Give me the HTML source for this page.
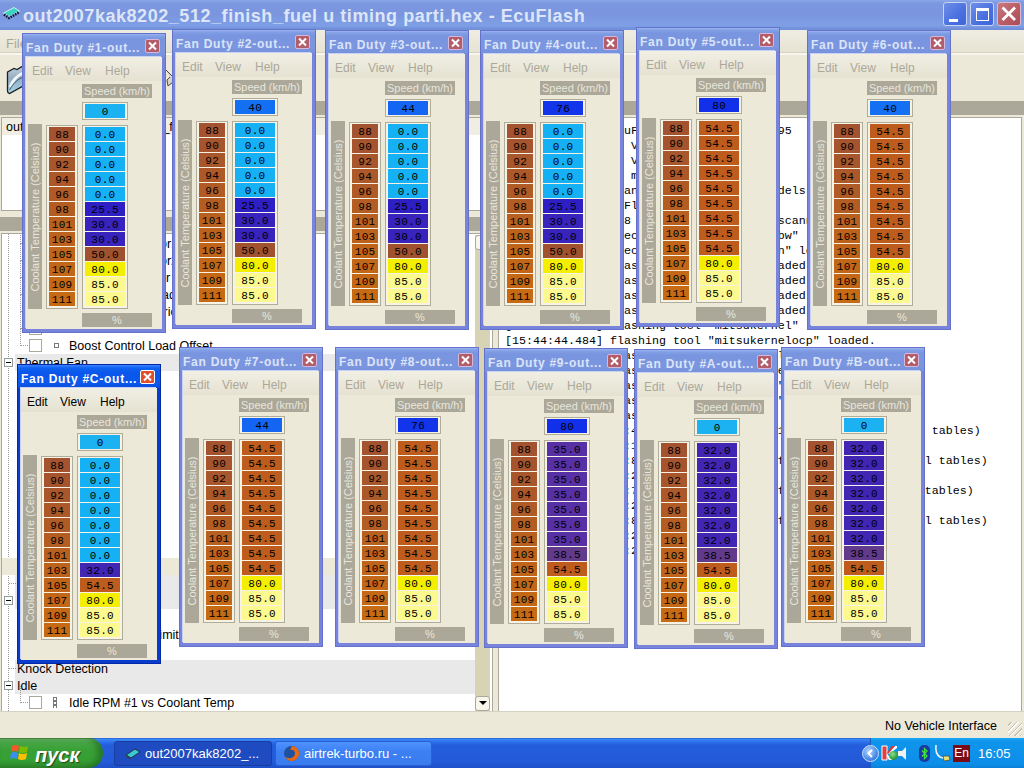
<!DOCTYPE html><html><head><meta charset="utf-8"><style>
html,body{margin:0;padding:0;}
body{width:1024px;height:768px;overflow:hidden;position:relative;background:#ece9d8;font-family:"Liberation Sans", sans-serif;}
div{box-sizing:border-box;}
#title{position:absolute;left:0;top:0;width:1024px;height:30px;background:linear-gradient(#8ca8ea 0,#7c98e0 3px,#7a95de 14px,#7d9ce3 22px,#7e9fe6 26px,#7592dc 28px,#708cd8 30px);}
#ticon{position:absolute;left:2px;top:6px;}
#ttext{position:absolute;left:23px;top:6px;font:bold 18px "Liberation Sans", sans-serif;color:#dce6f8;white-space:nowrap;letter-spacing:0.55px;}
.tbtn{position:absolute;top:2px;width:24px;height:24px;border:1px solid #c8d4f4;border-radius:3px;background:linear-gradient(135deg,#6f8fe8,#4a70e0 60%,#3d66d8);}
.tbtn.cls{background:linear-gradient(135deg,#c87a80,#b85a62 60%,#a84c58);border-color:#d8b8d0;}
#menu{position:absolute;left:0;top:30px;width:1024px;height:25px;background:linear-gradient(#efede2,#e6e3d3);border-bottom:2px solid #f8f6ee;box-shadow:inset 0 -1px 0 #d6d2c2;}
#menu span{position:absolute;top:6px;font-size:13px;color:#aca899;}
#folder{position:absolute;left:6px;top:64px;}
.ghdr{position:absolute;height:14px;background:#aca899;}
#files{position:absolute;left:1px;top:117px;width:494px;height:94px;background:#fff;border:1px solid #aca899;}
.frow{position:absolute;left:0;top:0;width:100%;height:17px;background:#f0eee2;font-size:12.5px;line-height:19px;padding-left:4px;white-space:nowrap;color:#000;}
#tree{position:absolute;left:1px;top:233px;width:492px;height:479px;background:#fff;border:1px solid #aca899;overflow:hidden;}
.tr{position:absolute;left:0;width:474px;height:17px;font-size:12.5px;line-height:17px;white-space:nowrap;color:#000;}
.tr.cat{background:#e9e9e9;}
.exp{position:absolute;width:9px;height:9px;border:1px solid #919b9c;background:#fff;}
.exp:after{content:"";position:absolute;left:1px;top:3px;width:5px;height:1px;background:#000;}
.chk{position:absolute;width:13px;height:13px;border:1px solid #aca899;background:#fff;}
.dv{position:absolute;width:1px;background:repeating-linear-gradient(#999 0 1px,transparent 1px 2px);}
.dh{position:absolute;height:1px;background:repeating-linear-gradient(90deg,#999 0 1px,transparent 1px 2px);}
#sb{position:absolute;left:473px;top:1px;width:15px;height:476px;background:#d8d3b4;}
#log{position:absolute;left:498px;top:117px;width:524px;height:595px;background:#fff;border:1px solid #aca899;font:11.67px/15px "Liberation Mono", monospace;color:#000;white-space:pre;padding:6px 0 0 6px;overflow:hidden;}
#status{position:absolute;left:0;top:711px;width:1024px;height:27px;background:#ece9d8;border-top:1px solid #d6d2c2;}
#status span{position:absolute;left:885px;top:7px;font-size:12.5px;color:#000;}
#grip{position:absolute;right:2px;bottom:2px;width:14px;height:14px;background:repeating-linear-gradient(135deg,transparent 0 2px,#c6c2b2 2px 3px,#fff 3px 4px);}
#taskbar{position:absolute;left:0;top:738px;width:1024px;height:30px;background:linear-gradient(#1e4cc0 0,#3c8cf8 1px,#3078f0 3px,#245ddb 7px,#225ad8 24px,#1d4fc8 30px);}
.win{position:absolute;width:144px;height:300px;background:#7884dc;box-shadow:inset 0 0 0 1px #6472cc;}
.win.act{background:#0a3ccc;box-shadow:inset 0 0 0 1px #0028a8;}
.wt{position:absolute;left:1px;top:0;width:142px;height:24px;border-top:1px solid #6472cc;background:linear-gradient(#9cb4f0 0,#82a0e6 2px,#7a95df 5px,#7b96df 18px,#7590dc 24px);}
.win.act .wt{border-top-color:#0028a8;background:linear-gradient(#3b82ff 0,#0f62f2 3px,#0a56ea 8px,#0a58ec 18px,#0a4cd8 24px);}
.wtt{position:absolute;left:4px;top:8px;font:bold 12px "Liberation Sans", sans-serif;color:#dbe4f8;white-space:nowrap;letter-spacing:0.75px;}
.win.act .wtt{color:#fff;}
.wx{position:absolute;left:123px;top:6px;width:15px;height:14px;border:1px solid #d6b8dc;border-radius:2px;background:#b35c6a;}
.wx svg{position:absolute;left:-1px;top:-1px;}
.win.act .wx{background:#e0502c;border-color:#fff;}
.wc{position:absolute;left:4px;top:24px;width:136px;height:272px;background:#ece9d8;box-shadow:-1px -1px 0 #c8d2f4;}
.wm{position:absolute;left:0;top:0;width:136px;height:24px;background:linear-gradient(#f1efe4,#e5e2d2);}
.wm span{position:absolute;top:7px;font-size:12px;color:#aca899;}
.win.act .wm span{color:#000;}
.lbl{position:absolute;background:#aca899;color:#e8e6dc;font-size:11px;text-align:center;}
.sp{left:56px;top:27px;width:70px;height:14px;line-height:14px;}
.pc{left:56px;top:256px;width:70px;height:14px;line-height:14px;}
.ct{left:2px;top:67px;width:14px;height:185px;}
.ct span{position:absolute;left:-86px;top:86px;width:185px;height:14px;line-height:14px;transform:rotate(-90deg);text-align:center;white-space:nowrap;}
.box{position:absolute;border:1px solid #b0ac9a;background:#f6f2e6;padding:1px 2px;}
.spb{left:56px;top:45px;width:46px;height:18px;}
.tb{left:20px;top:68px;width:32px;height:184px;}
.vb{left:56px;top:68px;width:46px;height:184px;}
.cell{height:14px;margin-bottom:1px;font:11px/16px "Liberation Mono", monospace;overflow:hidden;letter-spacing:0.3px;text-indent:0.3px;color:#000;text-align:center;}
.spb .cell{margin:0;}
</style></head><body><div id="title"></div><div id="ticon"><svg width="19" height="15" viewBox="0 0 19 15"><path d="M1.5 7 L12 1.5 L17.5 5 L7 10.5 Z" fill="#3cd2c2" stroke="#d8f4ee" stroke-width="0.9"/><path d="M2 8.5 L7 12 L17.5 6" stroke="#10183a" stroke-width="2.6" stroke-dasharray="1.6 1" fill="none"/></svg></div><div id="ttext">out2007kak8202_512_finish_fuel u timing parti.hex - EcuFlash</div><div class="tbtn" style="left:943px"><div style="position:absolute;left:5px;top:16px;width:9px;height:3px;background:#fff"></div></div><div class="tbtn" style="left:970px"><div style="position:absolute;left:5px;top:5px;width:13px;height:13px;border:1.5px solid #fff;border-top-width:3px"></div></div><div class="tbtn cls" style="left:997px"><svg width="22" height="22" viewBox="0 0 22 22" style="position:absolute;left:0;top:0"><path d="M4.5 4.5 L17 17 M17 4.5 L4.5 17" stroke="#fff" stroke-width="2.8"/></svg></div><div id="menu"><span style="left:6px">File</span></div><div id="folder"><svg width="18" height="32" viewBox="0 0 18 32"><defs><linearGradient id="fg" x1="0" y1="0" x2="0" y2="1"><stop offset="0" stop-color="#c4d0d8"/><stop offset="0.45" stop-color="#94aec2"/><stop offset="1" stop-color="#a6d6ea"/></linearGradient></defs><path d="M1.5 8 L8 4.5 L11 5.5 L17 2 L17 22 L3.5 29.5 Q1.5 29 1.5 27 Z" fill="url(#fg)" stroke="#1c2024" stroke-width="1.3"/><path d="M4 23 Q8 13 17 9" stroke="#f4f8fa" stroke-width="2.6" fill="none"/><path d="M3.5 26 Q8 17 17 13" stroke="#3a5068" stroke-width="0.9" fill="none"/></svg></div><svg style="position:absolute;left:164px;top:68px" width="10" height="20" viewBox="0 0 10 20"><path d="M1 1 L9 9 L9 14 L4 18 L3 12 L6 9" stroke="#4a4a40" stroke-width="1" fill="#d8d4c8"/></svg><div class="ghdr" style="left:0;top:101px;width:494px"></div><div class="ghdr" style="left:498px;top:101px;width:526px"></div><div id="files"><div class="frow">out2007kak8202_512_finish_fuel u timing parti.hex</div></div><div class="ghdr" style="left:0;top:217px;width:494px"></div><div id="tree"><div class="dv" style="left:6px;top:0;height:477px"></div><div class="tr" style="top:1px;"><div class="dh" style="left:19px;top:8px;width:8px"></div><div class="chk" style="left:27px;top:2px"></div><div style="position:absolute;left:52px;top:6px;width:5px;height:5px;border:1px solid #777"></div><span style="position:absolute;left:67px;top:1px">Boost Error Factor1 (Low)</span></div><div class="dv" style="left:18px;top:-7px;height:17px"></div><div class="tr" style="top:18px;"><div class="dh" style="left:19px;top:8px;width:8px"></div><div class="chk" style="left:27px;top:2px"></div><div style="position:absolute;left:52px;top:6px;width:5px;height:5px;border:1px solid #777"></div><span style="position:absolute;left:67px;top:1px">Boost Error Factor2 (Low)</span></div><div class="dv" style="left:18px;top:10px;height:17px"></div><div class="tr" style="top:35px;"><div class="dh" style="left:19px;top:8px;width:8px"></div><div class="chk" style="left:27px;top:2px"></div><div style="position:absolute;left:52px;top:6px;width:5px;height:5px;border:1px solid #777"></div><span style="position:absolute;left:67px;top:1px">Boost Target Error</span></div><div class="dv" style="left:18px;top:27px;height:17px"></div><div class="tr" style="top:52px;"><div class="dh" style="left:19px;top:8px;width:8px"></div><div class="chk" style="left:27px;top:2px"></div><div style="position:absolute;left:52px;top:6px;width:5px;height:5px;border:1px solid #777"></div><span style="position:absolute;left:67px;top:1px">Boost Control Load</span></div><div class="dv" style="left:18px;top:44px;height:17px"></div><div class="tr" style="top:69px;"><div class="dh" style="left:19px;top:8px;width:8px"></div><div class="chk" style="left:27px;top:2px"></div><div style="position:absolute;left:52px;top:6px;width:5px;height:5px;border:1px solid #777"></div><span style="position:absolute;left:67px;top:1px">Boost Control Period</span></div><div class="dv" style="left:18px;top:61px;height:17px"></div><div class="tr" style="top:86px;"><div class="dh" style="left:19px;top:8px;width:8px"></div><div class="chk" style="left:27px;top:2px"></div><div style="position:absolute;left:52px;top:6px;width:5px;height:5px;border:1px solid #777"></div><span style="position:absolute;left:67px;top:1px">Boost Max Load</span></div><div class="dv" style="left:18px;top:78px;height:17px"></div><div class="tr" style="top:103px;"><div class="dh" style="left:19px;top:8px;width:8px"></div><div class="chk" style="left:27px;top:2px"></div><div style="position:absolute;left:52px;top:6px;width:5px;height:5px;border:1px solid #777"></div><span style="position:absolute;left:67px;top:1px">Boost Control Load Offset</span></div><div class="dv" style="left:18px;top:95px;height:17px"></div><div class="tr cat" style="top:120px;left:13px;width:461px"><span style="position:absolute;left:2px;top:1px">Thermal Fan</span></div><div style="left:2px;top:124px" class="exp"></div><div class="tr" style="top:137px;"><div class="dh" style="left:19px;top:8px;width:8px"></div><div class="chk" style="left:27px;top:2px"></div><div style="position:absolute;left:52px;top:6px;width:5px;height:5px;border:1px solid #777"></div><span style="position:absolute;left:67px;top:1px">Fan Duty #1</span></div><div class="dv" style="left:18px;top:129px;height:17px"></div><div class="tr" style="top:154px;"><div class="dh" style="left:19px;top:8px;width:8px"></div><div class="chk" style="left:27px;top:2px"></div><div style="position:absolute;left:52px;top:6px;width:5px;height:5px;border:1px solid #777"></div><span style="position:absolute;left:67px;top:1px">Fan Duty #2</span></div><div class="dv" style="left:18px;top:146px;height:17px"></div><div class="tr" style="top:171px;"><div class="dh" style="left:19px;top:8px;width:8px"></div><div class="chk" style="left:27px;top:2px"></div><div style="position:absolute;left:52px;top:6px;width:5px;height:5px;border:1px solid #777"></div><span style="position:absolute;left:67px;top:1px">Fan Duty #3</span></div><div class="dv" style="left:18px;top:163px;height:17px"></div><div class="tr" style="top:188px;"><div class="dh" style="left:19px;top:8px;width:8px"></div><div class="chk" style="left:27px;top:2px"></div><div style="position:absolute;left:52px;top:6px;width:5px;height:5px;border:1px solid #777"></div><span style="position:absolute;left:67px;top:1px">Fan Duty #4</span></div><div class="dv" style="left:18px;top:180px;height:17px"></div><div class="tr" style="top:205px;"><div class="dh" style="left:19px;top:8px;width:8px"></div><div class="chk" style="left:27px;top:2px"></div><div style="position:absolute;left:52px;top:6px;width:5px;height:5px;border:1px solid #777"></div><span style="position:absolute;left:67px;top:1px">Fan Duty #5</span></div><div class="dv" style="left:18px;top:197px;height:17px"></div><div class="tr" style="top:222px;"><div class="dh" style="left:19px;top:8px;width:8px"></div><div class="chk" style="left:27px;top:2px"></div><div style="position:absolute;left:52px;top:6px;width:5px;height:5px;border:1px solid #777"></div><span style="position:absolute;left:67px;top:1px">Fan Duty #6</span></div><div class="dv" style="left:18px;top:214px;height:17px"></div><div class="tr" style="top:239px;"><div class="dh" style="left:19px;top:8px;width:8px"></div><div class="chk" style="left:27px;top:2px"></div><div style="position:absolute;left:52px;top:6px;width:5px;height:5px;border:1px solid #777"></div><span style="position:absolute;left:67px;top:1px">Fan Duty #7</span></div><div class="dv" style="left:18px;top:231px;height:17px"></div><div class="tr" style="top:256px;"><div class="dh" style="left:19px;top:8px;width:8px"></div><div class="chk" style="left:27px;top:2px"></div><div style="position:absolute;left:52px;top:6px;width:5px;height:5px;border:1px solid #777"></div><span style="position:absolute;left:67px;top:1px">Fan Duty #8</span></div><div class="dv" style="left:18px;top:248px;height:17px"></div><div class="tr" style="top:273px;"><div class="dh" style="left:19px;top:8px;width:8px"></div><div class="chk" style="left:27px;top:2px"></div><div style="position:absolute;left:52px;top:6px;width:5px;height:5px;border:1px solid #777"></div><span style="position:absolute;left:67px;top:1px">Fan Duty #9</span></div><div class="dv" style="left:18px;top:265px;height:17px"></div><div class="tr" style="top:290px;"><div class="dh" style="left:19px;top:8px;width:8px"></div><div class="chk" style="left:27px;top:2px"></div><div style="position:absolute;left:52px;top:6px;width:5px;height:5px;border:1px solid #777"></div><span style="position:absolute;left:67px;top:1px">Fan Duty #10</span></div><div class="dv" style="left:18px;top:282px;height:17px"></div><div class="tr" style="top:307px;"><div class="dh" style="left:19px;top:8px;width:8px"></div><div class="chk" style="left:27px;top:2px"></div><div style="position:absolute;left:52px;top:6px;width:5px;height:5px;border:1px solid #777"></div><span style="position:absolute;left:67px;top:1px">Fan Duty #11</span></div><div class="dv" style="left:18px;top:299px;height:17px"></div><div class="tr" style="top:324px;background:#ece9d8;"><div class="dh" style="left:19px;top:8px;width:8px"></div><div class="chk" style="left:27px;top:2px"></div><div style="position:absolute;left:52px;top:6px;width:5px;height:5px;border:1px solid #777"></div><span style="position:absolute;left:67px;top:1px">Fan Duty #C</span></div><div class="dv" style="left:18px;top:316px;height:17px"></div><div class="tr cat" style="top:341px;left:13px;width:461px"><span style="position:absolute;left:2px;top:1px">Rev Limit</span></div><div class="dh" style="left:7px;top:349px;width:7px"></div><div class="tr cat" style="top:358px;left:13px;width:461px"><span style="position:absolute;left:2px;top:1px">Limits</span></div><div style="left:2px;top:362px" class="exp"></div><div class="tr" style="top:375px;"><div class="dh" style="left:19px;top:8px;width:8px"></div><div class="chk" style="left:27px;top:2px"></div><div style="position:absolute;left:52px;top:6px;width:5px;height:5px;border:1px solid #777"></div><span style="position:absolute;left:67px;top:1px">Rev Limit</span></div><div class="dv" style="left:18px;top:367px;height:17px"></div><div class="tr" style="top:392px;"><div class="dh" style="left:19px;top:8px;width:8px"></div><div class="chk" style="left:27px;top:2px"></div><div style="position:absolute;left:52px;top:6px;width:5px;height:5px;border:1px solid #777"></div><span style="position:absolute;left:67px;top:1px">Vehicle Speed Limit</span></div><div class="dv" style="left:18px;top:384px;height:17px"></div><div class="tr" style="top:409px;"><div class="dh" style="left:19px;top:8px;width:8px"></div><div class="chk" style="left:27px;top:2px"></div><div style="position:absolute;left:52px;top:6px;width:5px;height:5px;border:1px solid #777"></div><span style="position:absolute;left:67px;top:1px">Fuel Cut Limit</span></div><div class="dv" style="left:18px;top:401px;height:17px"></div><div class="tr cat" style="top:426px;left:13px;width:461px"><span style="position:absolute;left:2px;top:1px">Knock Detection</span></div><div class="dh" style="left:7px;top:434px;width:7px"></div><div class="tr cat" style="top:443px;left:13px;width:461px"><span style="position:absolute;left:2px;top:1px">Idle</span></div><div style="left:2px;top:447px" class="exp"></div><div class="tr" style="top:460px;"><div class="dh" style="left:19px;top:8px;width:8px"></div><div class="chk" style="left:27px;top:2px"></div><div style="position:absolute;left:51px;top:3px;width:4px;height:11px;background:repeating-linear-gradient(#777 0 1px,#fff 1px 3px,#777 3px 4px);border-left:1px solid #777;border-right:1px solid #777"></div><span style="position:absolute;left:67px;top:1px">Idle RPM #1 vs Coolant Temp</span></div><div class="dv" style="left:18px;top:452px;height:17px"></div><div id="sb"><div style="position:absolute;left:0;top:0;width:15px;height:15px;background:#f8f6ea;border:1px solid #aca899;border-radius:3px"></div><div style="position:absolute;left:0;bottom:0;width:15px;height:15px;background:#f8f6ea;border:1px solid #aca899;border-radius:3px"><div style="position:absolute;left:3px;top:4px;width:0;height:0;border-left:4px solid transparent;border-right:4px solid transparent;border-top:4px solid #000"></div></div></div></div><div id="log">[15:44:43.546] EcuFlash Version 1.29.2495
[15:44:43.546] OS Version Windows XP
[15:44:43.546] Qt Version 4.3.2
[15:44:43.562] 28 memory models read.
[15:44:43.562] scanning for metadata models in rommetadata
[15:44:44.140] 3 Flash devices.
[15:44:44.156] 628 ROM metadata models scanned.
[15:44:44.156] checksum module &quot;subarudbw&quot; loaded.
[15:44:44.156] checksum module &quot;mitsucan&quot; loaded.
[15:44:44.468] flashing tool &quot;wrx02&quot; loaded.
[15:44:44.468] flashing tool &quot;wrx04&quot; loaded.
[15:44:44.468] flashing tool &quot;sti04&quot; loaded.
[15:44:44.484] flashing tool &quot;sti05&quot; loaded.
[15:44:44.484] flashing tool &quot;mitsukernel&quot; loaded.
[15:44:44.484] flashing tool &quot;mitsukernelocp&quot; loaded.
[15:44:44.484] flashing tool &quot;mitsubootloader&quot; loaded.
[15:44:44.500] flashing tool &quot;shbootmode&quot; loaded.
[15:44:44.500] flashing tool &quot;shaudmode&quot; loaded.
[15:44:44.500] flashing tool &quot;subarucan&quot; loaded.
[15:44:44.500] flashing tool &quot;mitsucan&quot; loaded.
[15:44:52.140] id:4B11 out2007kak8202_512_finish_f.hex (1084 tables)
[15:44:52.171] id:1 ROM metadata models loaded.
[15:45:28.328] id:8 out2007kak8202_512_finish_f.hex (1098 all tables)
[15:45:28.343] id:2 ROM metadata models loaded.
[15:47:02.718] id:7 out2007kak8202_512_finish_fue.hex (1098 tables)
[15:47:02.734] id:2 ROM metadata models loaded.
[15:52:12.281] id:8 out2007kak8202_512_finish_f.hex (1098 all tables)
[15:52:12.296] id:2 ROM metadata models loaded.
[15:58:40.828] id:2 ROM metadata models loaded.</div><div id="status"><span>No Vehicle Interface</span><div id="grip"></div></div>
<div id="taskbar">
 <div style="position:absolute;left:0;top:0;width:103px;height:30px;border-radius:0 14px 14px 0/0 15px 15px 0;background:linear-gradient(#2a6a2a 0,#68b868 1px,#4aa848 4px,#38a036 12px,#36a034 22px,#2f8c2c 30px);box-shadow:inset -5px 0 6px rgba(20,70,20,0.45);"></div>
 <svg style="position:absolute;left:10px;top:6px" width="20" height="18" viewBox="0 0 20 18"><path d="M2 2 Q5 0 9 2 L8 8 Q4 6 1 8 Z" fill="#f05a28"/><path d="M10 2 Q14 4 18 2 L17 8 Q13 10 9 8 Z" fill="#7cbb00"/><path d="M1 9 Q4 7 8 9 L7 15 Q3 13 0 15 Z" fill="#3a8ef0"/><path d="M9 9 Q13 11 17 9 L16 15 Q12 17 8 15 Z" fill="#ffc000"/></svg>
 <div style="position:absolute;left:35px;top:3px;font-family:'Liberation Sans',sans-serif;font-style:italic;font-weight:bold;font-size:20px;margin-top:3px;color:#fff;text-shadow:1px 1px 1px #1a4a1a;">пуск</div>
 <div style="position:absolute;left:114px;top:3px;width:158px;height:25px;border-radius:3px;background:#1e4cc0;border:1px solid #1a3ea0"></div>
 <svg style="position:absolute;left:125px;top:10px" width="16" height="12" viewBox="0 0 16 12"><path d="M1 7 L10 1 L15 4 L6 10 Z" fill="#3cc8d0" stroke="#203040"/><path d="M1 7 L1 8.5 L6 11.5 L6 10 Z" fill="#304050"/></svg>
 <div style="position:absolute;left:145px;top:8px;font-size:13px;color:#fff;white-space:nowrap">out2007kak8202_...</div>
 <div style="position:absolute;left:275px;top:3px;width:157px;height:25px;border-radius:3px;background:linear-gradient(#4f93ff,#3c80f4 40%,#3a7cf0);border:1px solid #2a60d0"></div>
 <svg style="position:absolute;left:283px;top:7px" width="17" height="17" viewBox="0 0 17 17"><circle cx="8.5" cy="8.5" r="7.5" fill="#2050a0"/><path d="M8.5 1 A7.5 7.5 0 1 1 1.5 11 Q4 14 8 13 Q12 12 12 8 Q11 4 7 5 Q9 2 8.5 1 Z" fill="#e86a10"/></svg>
 <div style="position:absolute;left:304px;top:8px;font-size:13px;color:#fff;white-space:nowrap">airtrek-turbo.ru - ...</div>
 <div style="position:absolute;left:870px;top:0;width:154px;height:30px;background:linear-gradient(#1aa8f8 0,#0f95ec 3px,#0c8ee8 26px,#0a80d8 30px);border-left:1px solid #1a5ab8"></div>
 <div style="position:absolute;left:862px;top:7px;width:17px;height:17px;border-radius:50%;background:radial-gradient(circle at 40% 35%,#b8d8ff,#4a8ae8 60%,#2a60c8);border:1px solid #cfe0ff"></div>
 <svg style="position:absolute;left:866px;top:11px" width="9" height="9" viewBox="0 0 9 9"><path d="M6 1 L2.5 4.5 L6 8" stroke="#fff" stroke-width="2" fill="none"/></svg>
 <svg style="position:absolute;left:881px;top:7px" width="17" height="16" viewBox="0 0 17 16"><path d="M1 1 L6 1 L6 15 L1 15 Z" fill="#e04040" stroke="#fff" stroke-width="1"/><path d="M6 8 L14 1 L16 1 L16 3 L8 9 Z" fill="#fff"/><path d="M6 8 L11 1 L14 1 L7 9 Z" fill="#e03030"/><path d="M6 9 L12 15 L8 15 L6 12 Z" fill="#fff"/></svg>
 
 <div style="position:absolute;left:889px;top:13px;width:9px;height:9px;border-radius:50%;background:radial-gradient(circle at 40% 35%,#8ee08e,#30a040 60%,#1a6a8a)"></div>
 <svg style="position:absolute;left:898px;top:9px" width="9" height="13" viewBox="0 0 9 13"><path d="M0 4 L4 4 L8 0 L8 13 L4 9 L0 9 Z" fill="#f0f0f0"/></svg>
 <div style="position:absolute;left:919px;top:7px;width:11px;height:17px;border-radius:5px;background:#1a3aa0"></div>
 <svg style="position:absolute;left:920px;top:9px" width="9" height="13" viewBox="0 0 9 13"><path d="M2 3.5 L7 9 L4.5 11.5 L4.5 1.5 L7 4 L2 9.5" stroke="#40e040" stroke-width="1.3" fill="none"/></svg>
 <svg style="position:absolute;left:934px;top:6px" width="17" height="18" viewBox="0 0 17 18"><path d="M2 1 Q1 10 6 13 L12 15" stroke="#f0f0f0" stroke-width="1.6" fill="none"/><path d="M9 12 L15 12 L16 16 L10 17 Z" fill="#e8e070" stroke="#404040" stroke-width="0.7"/></svg>
 <div style="position:absolute;left:953px;top:7px;width:17px;height:17px;background:#7a0a14;color:#fff;font-size:12px;line-height:17px;text-align:center">En</div>
 <div style="position:absolute;left:978px;top:8px;font-size:13px;color:#fff">16:05</div>
</div>
<div class="win" style="left:22px;top:33px"><div class="wt"></div><div class="wtt">Fan Duty #1-out...</div><div class="wx"><svg width="15" height="14" viewBox="0 0 15 14"><path d="M4 3.5 L11 10.5 M11 3.5 L4 10.5" stroke="#fff" stroke-width="2"/></svg></div><div class="wc"><div class="wm"><span style="left:6px">Edit</span><span style="left:39px">View</span><span style="left:79px">Help</span></div><div class="lbl sp">Speed (km/h)</div><div class="box spb"><div class="cell" style="background:#1cb2f2">0</div></div><div class="lbl ct"><span>Coolant Temperature (Celsius)</span></div><div class="box tb"><div class="cell" style="background:#a3532f">88</div><div class="cell" style="background:#a5542e">90</div><div class="cell" style="background:#a8562b">92</div><div class="cell" style="background:#ac5829">94</div><div class="cell" style="background:#b05a26">96</div><div class="cell" style="background:#b45d22">98</div><div class="cell" style="background:#b8601f">101</div><div class="cell" style="background:#bc621c">103</div><div class="cell" style="background:#c06419">105</div><div class="cell" style="background:#c26617">107</div><div class="cell" style="background:#c46815">109</div><div class="cell" style="background:#c66a13">111</div></div><div class="box vb"><div class="cell" style="background:#16b0f4">0.0</div><div class="cell" style="background:#16b0f4">0.0</div><div class="cell" style="background:#16b0f4">0.0</div><div class="cell" style="background:#16b0f4">0.0</div><div class="cell" style="background:#16b0f4">0.0</div><div class="cell" style="background:#2e1fc4">25.5</div><div class="cell" style="background:#3823bc">30.0</div><div class="cell" style="background:#3823bc">30.0</div><div class="cell" style="background:#a0522e">50.0</div><div class="cell" style="background:#f4ee00">80.0</div><div class="cell" style="background:#fcf98e">85.0</div><div class="cell" style="background:#fcf98e">85.0</div></div><div class="lbl pc">%</div></div></div><div class="win" style="left:172px;top:29px"><div class="wt"></div><div class="wtt">Fan Duty #2-out...</div><div class="wx"><svg width="15" height="14" viewBox="0 0 15 14"><path d="M4 3.5 L11 10.5 M11 3.5 L4 10.5" stroke="#fff" stroke-width="2"/></svg></div><div class="wc"><div class="wm"><span style="left:6px">Edit</span><span style="left:39px">View</span><span style="left:79px">Help</span></div><div class="lbl sp">Speed (km/h)</div><div class="box spb"><div class="cell" style="background:#1470f2">40</div></div><div class="lbl ct"><span>Coolant Temperature (Celsius)</span></div><div class="box tb"><div class="cell" style="background:#a3532f">88</div><div class="cell" style="background:#a5542e">90</div><div class="cell" style="background:#a8562b">92</div><div class="cell" style="background:#ac5829">94</div><div class="cell" style="background:#b05a26">96</div><div class="cell" style="background:#b45d22">98</div><div class="cell" style="background:#b8601f">101</div><div class="cell" style="background:#bc621c">103</div><div class="cell" style="background:#c06419">105</div><div class="cell" style="background:#c26617">107</div><div class="cell" style="background:#c46815">109</div><div class="cell" style="background:#c66a13">111</div></div><div class="box vb"><div class="cell" style="background:#16b0f4">0.0</div><div class="cell" style="background:#16b0f4">0.0</div><div class="cell" style="background:#16b0f4">0.0</div><div class="cell" style="background:#16b0f4">0.0</div><div class="cell" style="background:#16b0f4">0.0</div><div class="cell" style="background:#2e1fc4">25.5</div><div class="cell" style="background:#3823bc">30.0</div><div class="cell" style="background:#3823bc">30.0</div><div class="cell" style="background:#a0522e">50.0</div><div class="cell" style="background:#f4ee00">80.0</div><div class="cell" style="background:#fcf98e">85.0</div><div class="cell" style="background:#fcf98e">85.0</div></div><div class="lbl pc">%</div></div></div><div class="win" style="left:325px;top:30px"><div class="wt"></div><div class="wtt">Fan Duty #3-out...</div><div class="wx"><svg width="15" height="14" viewBox="0 0 15 14"><path d="M4 3.5 L11 10.5 M11 3.5 L4 10.5" stroke="#fff" stroke-width="2"/></svg></div><div class="wc"><div class="wm"><span style="left:6px">Edit</span><span style="left:39px">View</span><span style="left:79px">Help</span></div><div class="lbl sp">Speed (km/h)</div><div class="box spb"><div class="cell" style="background:#1466f2">44</div></div><div class="lbl ct"><span>Coolant Temperature (Celsius)</span></div><div class="box tb"><div class="cell" style="background:#a3532f">88</div><div class="cell" style="background:#a5542e">90</div><div class="cell" style="background:#a8562b">92</div><div class="cell" style="background:#ac5829">94</div><div class="cell" style="background:#b05a26">96</div><div class="cell" style="background:#b45d22">98</div><div class="cell" style="background:#b8601f">101</div><div class="cell" style="background:#bc621c">103</div><div class="cell" style="background:#c06419">105</div><div class="cell" style="background:#c26617">107</div><div class="cell" style="background:#c46815">109</div><div class="cell" style="background:#c66a13">111</div></div><div class="box vb"><div class="cell" style="background:#16b0f4">0.0</div><div class="cell" style="background:#16b0f4">0.0</div><div class="cell" style="background:#16b0f4">0.0</div><div class="cell" style="background:#16b0f4">0.0</div><div class="cell" style="background:#16b0f4">0.0</div><div class="cell" style="background:#2e1fc4">25.5</div><div class="cell" style="background:#3823bc">30.0</div><div class="cell" style="background:#3823bc">30.0</div><div class="cell" style="background:#a0522e">50.0</div><div class="cell" style="background:#f4ee00">80.0</div><div class="cell" style="background:#fcf98e">85.0</div><div class="cell" style="background:#fcf98e">85.0</div></div><div class="lbl pc">%</div></div></div><div class="win" style="left:480px;top:30px"><div class="wt"></div><div class="wtt">Fan Duty #4-out...</div><div class="wx"><svg width="15" height="14" viewBox="0 0 15 14"><path d="M4 3.5 L11 10.5 M11 3.5 L4 10.5" stroke="#fff" stroke-width="2"/></svg></div><div class="wc"><div class="wm"><span style="left:6px">Edit</span><span style="left:39px">View</span><span style="left:79px">Help</span></div><div class="lbl sp">Speed (km/h)</div><div class="box spb"><div class="cell" style="background:#1234ea">76</div></div><div class="lbl ct"><span>Coolant Temperature (Celsius)</span></div><div class="box tb"><div class="cell" style="background:#a3532f">88</div><div class="cell" style="background:#a5542e">90</div><div class="cell" style="background:#a8562b">92</div><div class="cell" style="background:#ac5829">94</div><div class="cell" style="background:#b05a26">96</div><div class="cell" style="background:#b45d22">98</div><div class="cell" style="background:#b8601f">101</div><div class="cell" style="background:#bc621c">103</div><div class="cell" style="background:#c06419">105</div><div class="cell" style="background:#c26617">107</div><div class="cell" style="background:#c46815">109</div><div class="cell" style="background:#c66a13">111</div></div><div class="box vb"><div class="cell" style="background:#16b0f4">0.0</div><div class="cell" style="background:#16b0f4">0.0</div><div class="cell" style="background:#16b0f4">0.0</div><div class="cell" style="background:#16b0f4">0.0</div><div class="cell" style="background:#16b0f4">0.0</div><div class="cell" style="background:#2e1fc4">25.5</div><div class="cell" style="background:#3823bc">30.0</div><div class="cell" style="background:#3823bc">30.0</div><div class="cell" style="background:#a0522e">50.0</div><div class="cell" style="background:#f4ee00">80.0</div><div class="cell" style="background:#fcf98e">85.0</div><div class="cell" style="background:#fcf98e">85.0</div></div><div class="lbl pc">%</div></div></div><div class="win" style="left:636px;top:27px"><div class="wt"></div><div class="wtt">Fan Duty #5-out...</div><div class="wx"><svg width="15" height="14" viewBox="0 0 15 14"><path d="M4 3.5 L11 10.5 M11 3.5 L4 10.5" stroke="#fff" stroke-width="2"/></svg></div><div class="wc"><div class="wm"><span style="left:6px">Edit</span><span style="left:39px">View</span><span style="left:79px">Help</span></div><div class="lbl sp">Speed (km/h)</div><div class="box spb"><div class="cell" style="background:#1230ea">80</div></div><div class="lbl ct"><span>Coolant Temperature (Celsius)</span></div><div class="box tb"><div class="cell" style="background:#a3532f">88</div><div class="cell" style="background:#a5542e">90</div><div class="cell" style="background:#a8562b">92</div><div class="cell" style="background:#ac5829">94</div><div class="cell" style="background:#b05a26">96</div><div class="cell" style="background:#b45d22">98</div><div class="cell" style="background:#b8601f">101</div><div class="cell" style="background:#bc621c">103</div><div class="cell" style="background:#c06419">105</div><div class="cell" style="background:#c26617">107</div><div class="cell" style="background:#c46815">109</div><div class="cell" style="background:#c66a13">111</div></div><div class="box vb"><div class="cell" style="background:#bd5c1c">54.5</div><div class="cell" style="background:#bd5c1c">54.5</div><div class="cell" style="background:#bd5c1c">54.5</div><div class="cell" style="background:#bd5c1c">54.5</div><div class="cell" style="background:#bd5c1c">54.5</div><div class="cell" style="background:#bd5c1c">54.5</div><div class="cell" style="background:#bd5c1c">54.5</div><div class="cell" style="background:#bd5c1c">54.5</div><div class="cell" style="background:#bd5c1c">54.5</div><div class="cell" style="background:#f4ee00">80.0</div><div class="cell" style="background:#fcf98e">85.0</div><div class="cell" style="background:#fcf98e">85.0</div></div><div class="lbl pc">%</div></div></div><div class="win" style="left:807px;top:30px"><div class="wt"></div><div class="wtt">Fan Duty #6-out...</div><div class="wx"><svg width="15" height="14" viewBox="0 0 15 14"><path d="M4 3.5 L11 10.5 M11 3.5 L4 10.5" stroke="#fff" stroke-width="2"/></svg></div><div class="wc"><div class="wm"><span style="left:6px">Edit</span><span style="left:39px">View</span><span style="left:79px">Help</span></div><div class="lbl sp">Speed (km/h)</div><div class="box spb"><div class="cell" style="background:#1470f2">40</div></div><div class="lbl ct"><span>Coolant Temperature (Celsius)</span></div><div class="box tb"><div class="cell" style="background:#a3532f">88</div><div class="cell" style="background:#a5542e">90</div><div class="cell" style="background:#a8562b">92</div><div class="cell" style="background:#ac5829">94</div><div class="cell" style="background:#b05a26">96</div><div class="cell" style="background:#b45d22">98</div><div class="cell" style="background:#b8601f">101</div><div class="cell" style="background:#bc621c">103</div><div class="cell" style="background:#c06419">105</div><div class="cell" style="background:#c26617">107</div><div class="cell" style="background:#c46815">109</div><div class="cell" style="background:#c66a13">111</div></div><div class="box vb"><div class="cell" style="background:#bd5c1c">54.5</div><div class="cell" style="background:#bd5c1c">54.5</div><div class="cell" style="background:#bd5c1c">54.5</div><div class="cell" style="background:#bd5c1c">54.5</div><div class="cell" style="background:#bd5c1c">54.5</div><div class="cell" style="background:#bd5c1c">54.5</div><div class="cell" style="background:#bd5c1c">54.5</div><div class="cell" style="background:#bd5c1c">54.5</div><div class="cell" style="background:#bd5c1c">54.5</div><div class="cell" style="background:#f4ee00">80.0</div><div class="cell" style="background:#fcf98e">85.0</div><div class="cell" style="background:#fcf98e">85.0</div></div><div class="lbl pc">%</div></div></div><div class="win" style="left:179px;top:347px"><div class="wt"></div><div class="wtt">Fan Duty #7-out...</div><div class="wx"><svg width="15" height="14" viewBox="0 0 15 14"><path d="M4 3.5 L11 10.5 M11 3.5 L4 10.5" stroke="#fff" stroke-width="2"/></svg></div><div class="wc"><div class="wm"><span style="left:6px">Edit</span><span style="left:39px">View</span><span style="left:79px">Help</span></div><div class="lbl sp">Speed (km/h)</div><div class="box spb"><div class="cell" style="background:#1466f2">44</div></div><div class="lbl ct"><span>Coolant Temperature (Celsius)</span></div><div class="box tb"><div class="cell" style="background:#a3532f">88</div><div class="cell" style="background:#a5542e">90</div><div class="cell" style="background:#a8562b">92</div><div class="cell" style="background:#ac5829">94</div><div class="cell" style="background:#b05a26">96</div><div class="cell" style="background:#b45d22">98</div><div class="cell" style="background:#b8601f">101</div><div class="cell" style="background:#bc621c">103</div><div class="cell" style="background:#c06419">105</div><div class="cell" style="background:#c26617">107</div><div class="cell" style="background:#c46815">109</div><div class="cell" style="background:#c66a13">111</div></div><div class="box vb"><div class="cell" style="background:#bd5c1c">54.5</div><div class="cell" style="background:#bd5c1c">54.5</div><div class="cell" style="background:#bd5c1c">54.5</div><div class="cell" style="background:#bd5c1c">54.5</div><div class="cell" style="background:#bd5c1c">54.5</div><div class="cell" style="background:#bd5c1c">54.5</div><div class="cell" style="background:#bd5c1c">54.5</div><div class="cell" style="background:#bd5c1c">54.5</div><div class="cell" style="background:#bd5c1c">54.5</div><div class="cell" style="background:#f4ee00">80.0</div><div class="cell" style="background:#fcf98e">85.0</div><div class="cell" style="background:#fcf98e">85.0</div></div><div class="lbl pc">%</div></div></div><div class="win" style="left:335px;top:347px"><div class="wt"></div><div class="wtt">Fan Duty #8-out...</div><div class="wx"><svg width="15" height="14" viewBox="0 0 15 14"><path d="M4 3.5 L11 10.5 M11 3.5 L4 10.5" stroke="#fff" stroke-width="2"/></svg></div><div class="wc"><div class="wm"><span style="left:6px">Edit</span><span style="left:39px">View</span><span style="left:79px">Help</span></div><div class="lbl sp">Speed (km/h)</div><div class="box spb"><div class="cell" style="background:#1234ea">76</div></div><div class="lbl ct"><span>Coolant Temperature (Celsius)</span></div><div class="box tb"><div class="cell" style="background:#a3532f">88</div><div class="cell" style="background:#a5542e">90</div><div class="cell" style="background:#a8562b">92</div><div class="cell" style="background:#ac5829">94</div><div class="cell" style="background:#b05a26">96</div><div class="cell" style="background:#b45d22">98</div><div class="cell" style="background:#b8601f">101</div><div class="cell" style="background:#bc621c">103</div><div class="cell" style="background:#c06419">105</div><div class="cell" style="background:#c26617">107</div><div class="cell" style="background:#c46815">109</div><div class="cell" style="background:#c66a13">111</div></div><div class="box vb"><div class="cell" style="background:#bd5c1c">54.5</div><div class="cell" style="background:#bd5c1c">54.5</div><div class="cell" style="background:#bd5c1c">54.5</div><div class="cell" style="background:#bd5c1c">54.5</div><div class="cell" style="background:#bd5c1c">54.5</div><div class="cell" style="background:#bd5c1c">54.5</div><div class="cell" style="background:#bd5c1c">54.5</div><div class="cell" style="background:#bd5c1c">54.5</div><div class="cell" style="background:#bd5c1c">54.5</div><div class="cell" style="background:#f4ee00">80.0</div><div class="cell" style="background:#fcf98e">85.0</div><div class="cell" style="background:#fcf98e">85.0</div></div><div class="lbl pc">%</div></div></div><div class="win" style="left:484px;top:348px"><div class="wt"></div><div class="wtt">Fan Duty #9-out...</div><div class="wx"><svg width="15" height="14" viewBox="0 0 15 14"><path d="M4 3.5 L11 10.5 M11 3.5 L4 10.5" stroke="#fff" stroke-width="2"/></svg></div><div class="wc"><div class="wm"><span style="left:6px">Edit</span><span style="left:39px">View</span><span style="left:79px">Help</span></div><div class="lbl sp">Speed (km/h)</div><div class="box spb"><div class="cell" style="background:#1230ea">80</div></div><div class="lbl ct"><span>Coolant Temperature (Celsius)</span></div><div class="box tb"><div class="cell" style="background:#a3532f">88</div><div class="cell" style="background:#a5542e">90</div><div class="cell" style="background:#a8562b">92</div><div class="cell" style="background:#ac5829">94</div><div class="cell" style="background:#b05a26">96</div><div class="cell" style="background:#b45d22">98</div><div class="cell" style="background:#b8601f">101</div><div class="cell" style="background:#bc621c">103</div><div class="cell" style="background:#c06419">105</div><div class="cell" style="background:#c26617">107</div><div class="cell" style="background:#c46815">109</div><div class="cell" style="background:#c66a13">111</div></div><div class="box vb"><div class="cell" style="background:#5630a4">35.0</div><div class="cell" style="background:#5630a4">35.0</div><div class="cell" style="background:#5630a4">35.0</div><div class="cell" style="background:#5630a4">35.0</div><div class="cell" style="background:#5630a4">35.0</div><div class="cell" style="background:#5630a4">35.0</div><div class="cell" style="background:#5630a4">35.0</div><div class="cell" style="background:#623a8c">38.5</div><div class="cell" style="background:#bd5c1c">54.5</div><div class="cell" style="background:#f4ee00">80.0</div><div class="cell" style="background:#fcf98e">85.0</div><div class="cell" style="background:#fcf98e">85.0</div></div><div class="lbl pc">%</div></div></div><div class="win" style="left:634px;top:349px"><div class="wt"></div><div class="wtt">Fan Duty #A-out...</div><div class="wx"><svg width="15" height="14" viewBox="0 0 15 14"><path d="M4 3.5 L11 10.5 M11 3.5 L4 10.5" stroke="#fff" stroke-width="2"/></svg></div><div class="wc"><div class="wm"><span style="left:6px">Edit</span><span style="left:39px">View</span><span style="left:79px">Help</span></div><div class="lbl sp">Speed (km/h)</div><div class="box spb"><div class="cell" style="background:#1cb2f2">0</div></div><div class="lbl ct"><span>Coolant Temperature (Celsius)</span></div><div class="box tb"><div class="cell" style="background:#a3532f">88</div><div class="cell" style="background:#a5542e">90</div><div class="cell" style="background:#a8562b">92</div><div class="cell" style="background:#ac5829">94</div><div class="cell" style="background:#b05a26">96</div><div class="cell" style="background:#b45d22">98</div><div class="cell" style="background:#b8601f">101</div><div class="cell" style="background:#bc621c">103</div><div class="cell" style="background:#c06419">105</div><div class="cell" style="background:#c26617">107</div><div class="cell" style="background:#c46815">109</div><div class="cell" style="background:#c66a13">111</div></div><div class="box vb"><div class="cell" style="background:#4026b2">32.0</div><div class="cell" style="background:#4026b2">32.0</div><div class="cell" style="background:#4026b2">32.0</div><div class="cell" style="background:#4026b2">32.0</div><div class="cell" style="background:#4026b2">32.0</div><div class="cell" style="background:#4026b2">32.0</div><div class="cell" style="background:#4026b2">32.0</div><div class="cell" style="background:#623a8c">38.5</div><div class="cell" style="background:#bd5c1c">54.5</div><div class="cell" style="background:#f4ee00">80.0</div><div class="cell" style="background:#fcf98e">85.0</div><div class="cell" style="background:#fcf98e">85.0</div></div><div class="lbl pc">%</div></div></div><div class="win" style="left:781px;top:347px"><div class="wt"></div><div class="wtt">Fan Duty #B-out...</div><div class="wx"><svg width="15" height="14" viewBox="0 0 15 14"><path d="M4 3.5 L11 10.5 M11 3.5 L4 10.5" stroke="#fff" stroke-width="2"/></svg></div><div class="wc"><div class="wm"><span style="left:6px">Edit</span><span style="left:39px">View</span><span style="left:79px">Help</span></div><div class="lbl sp">Speed (km/h)</div><div class="box spb"><div class="cell" style="background:#1cb2f2">0</div></div><div class="lbl ct"><span>Coolant Temperature (Celsius)</span></div><div class="box tb"><div class="cell" style="background:#a3532f">88</div><div class="cell" style="background:#a5542e">90</div><div class="cell" style="background:#a8562b">92</div><div class="cell" style="background:#ac5829">94</div><div class="cell" style="background:#b05a26">96</div><div class="cell" style="background:#b45d22">98</div><div class="cell" style="background:#b8601f">101</div><div class="cell" style="background:#bc621c">103</div><div class="cell" style="background:#c06419">105</div><div class="cell" style="background:#c26617">107</div><div class="cell" style="background:#c46815">109</div><div class="cell" style="background:#c66a13">111</div></div><div class="box vb"><div class="cell" style="background:#4026b2">32.0</div><div class="cell" style="background:#4026b2">32.0</div><div class="cell" style="background:#4026b2">32.0</div><div class="cell" style="background:#4026b2">32.0</div><div class="cell" style="background:#4026b2">32.0</div><div class="cell" style="background:#4026b2">32.0</div><div class="cell" style="background:#4026b2">32.0</div><div class="cell" style="background:#623a8c">38.5</div><div class="cell" style="background:#bd5c1c">54.5</div><div class="cell" style="background:#f4ee00">80.0</div><div class="cell" style="background:#fcf98e">85.0</div><div class="cell" style="background:#fcf98e">85.0</div></div><div class="lbl pc">%</div></div></div><div class="win act" style="left:17px;top:364px"><div class="wt"></div><div class="wtt">Fan Duty #C-out...</div><div class="wx"><svg width="15" height="14" viewBox="0 0 15 14"><path d="M4 3.5 L11 10.5 M11 3.5 L4 10.5" stroke="#fff" stroke-width="2"/></svg></div><div class="wc"><div class="wm"><span style="left:6px">Edit</span><span style="left:39px">View</span><span style="left:79px">Help</span></div><div class="lbl sp">Speed (km/h)</div><div class="box spb"><div class="cell" style="background:#1cb2f2">0</div></div><div class="lbl ct"><span>Coolant Temperature (Celsius)</span></div><div class="box tb"><div class="cell" style="background:#a3532f">88</div><div class="cell" style="background:#a5542e">90</div><div class="cell" style="background:#a8562b">92</div><div class="cell" style="background:#ac5829">94</div><div class="cell" style="background:#b05a26">96</div><div class="cell" style="background:#b45d22">98</div><div class="cell" style="background:#b8601f">101</div><div class="cell" style="background:#bc621c">103</div><div class="cell" style="background:#c06419">105</div><div class="cell" style="background:#c26617">107</div><div class="cell" style="background:#c46815">109</div><div class="cell" style="background:#c66a13">111</div></div><div class="box vb"><div class="cell" style="background:#16b0f4">0.0</div><div class="cell" style="background:#16b0f4">0.0</div><div class="cell" style="background:#16b0f4">0.0</div><div class="cell" style="background:#16b0f4">0.0</div><div class="cell" style="background:#16b0f4">0.0</div><div class="cell" style="background:#16b0f4">0.0</div><div class="cell" style="background:#16b0f4">0.0</div><div class="cell" style="background:#4026b2">32.0</div><div class="cell" style="background:#bd5c1c">54.5</div><div class="cell" style="background:#f4ee00">80.0</div><div class="cell" style="background:#fcf98e">85.0</div><div class="cell" style="background:#fcf98e">85.0</div></div><div class="lbl pc">%</div></div></div></body></html>
